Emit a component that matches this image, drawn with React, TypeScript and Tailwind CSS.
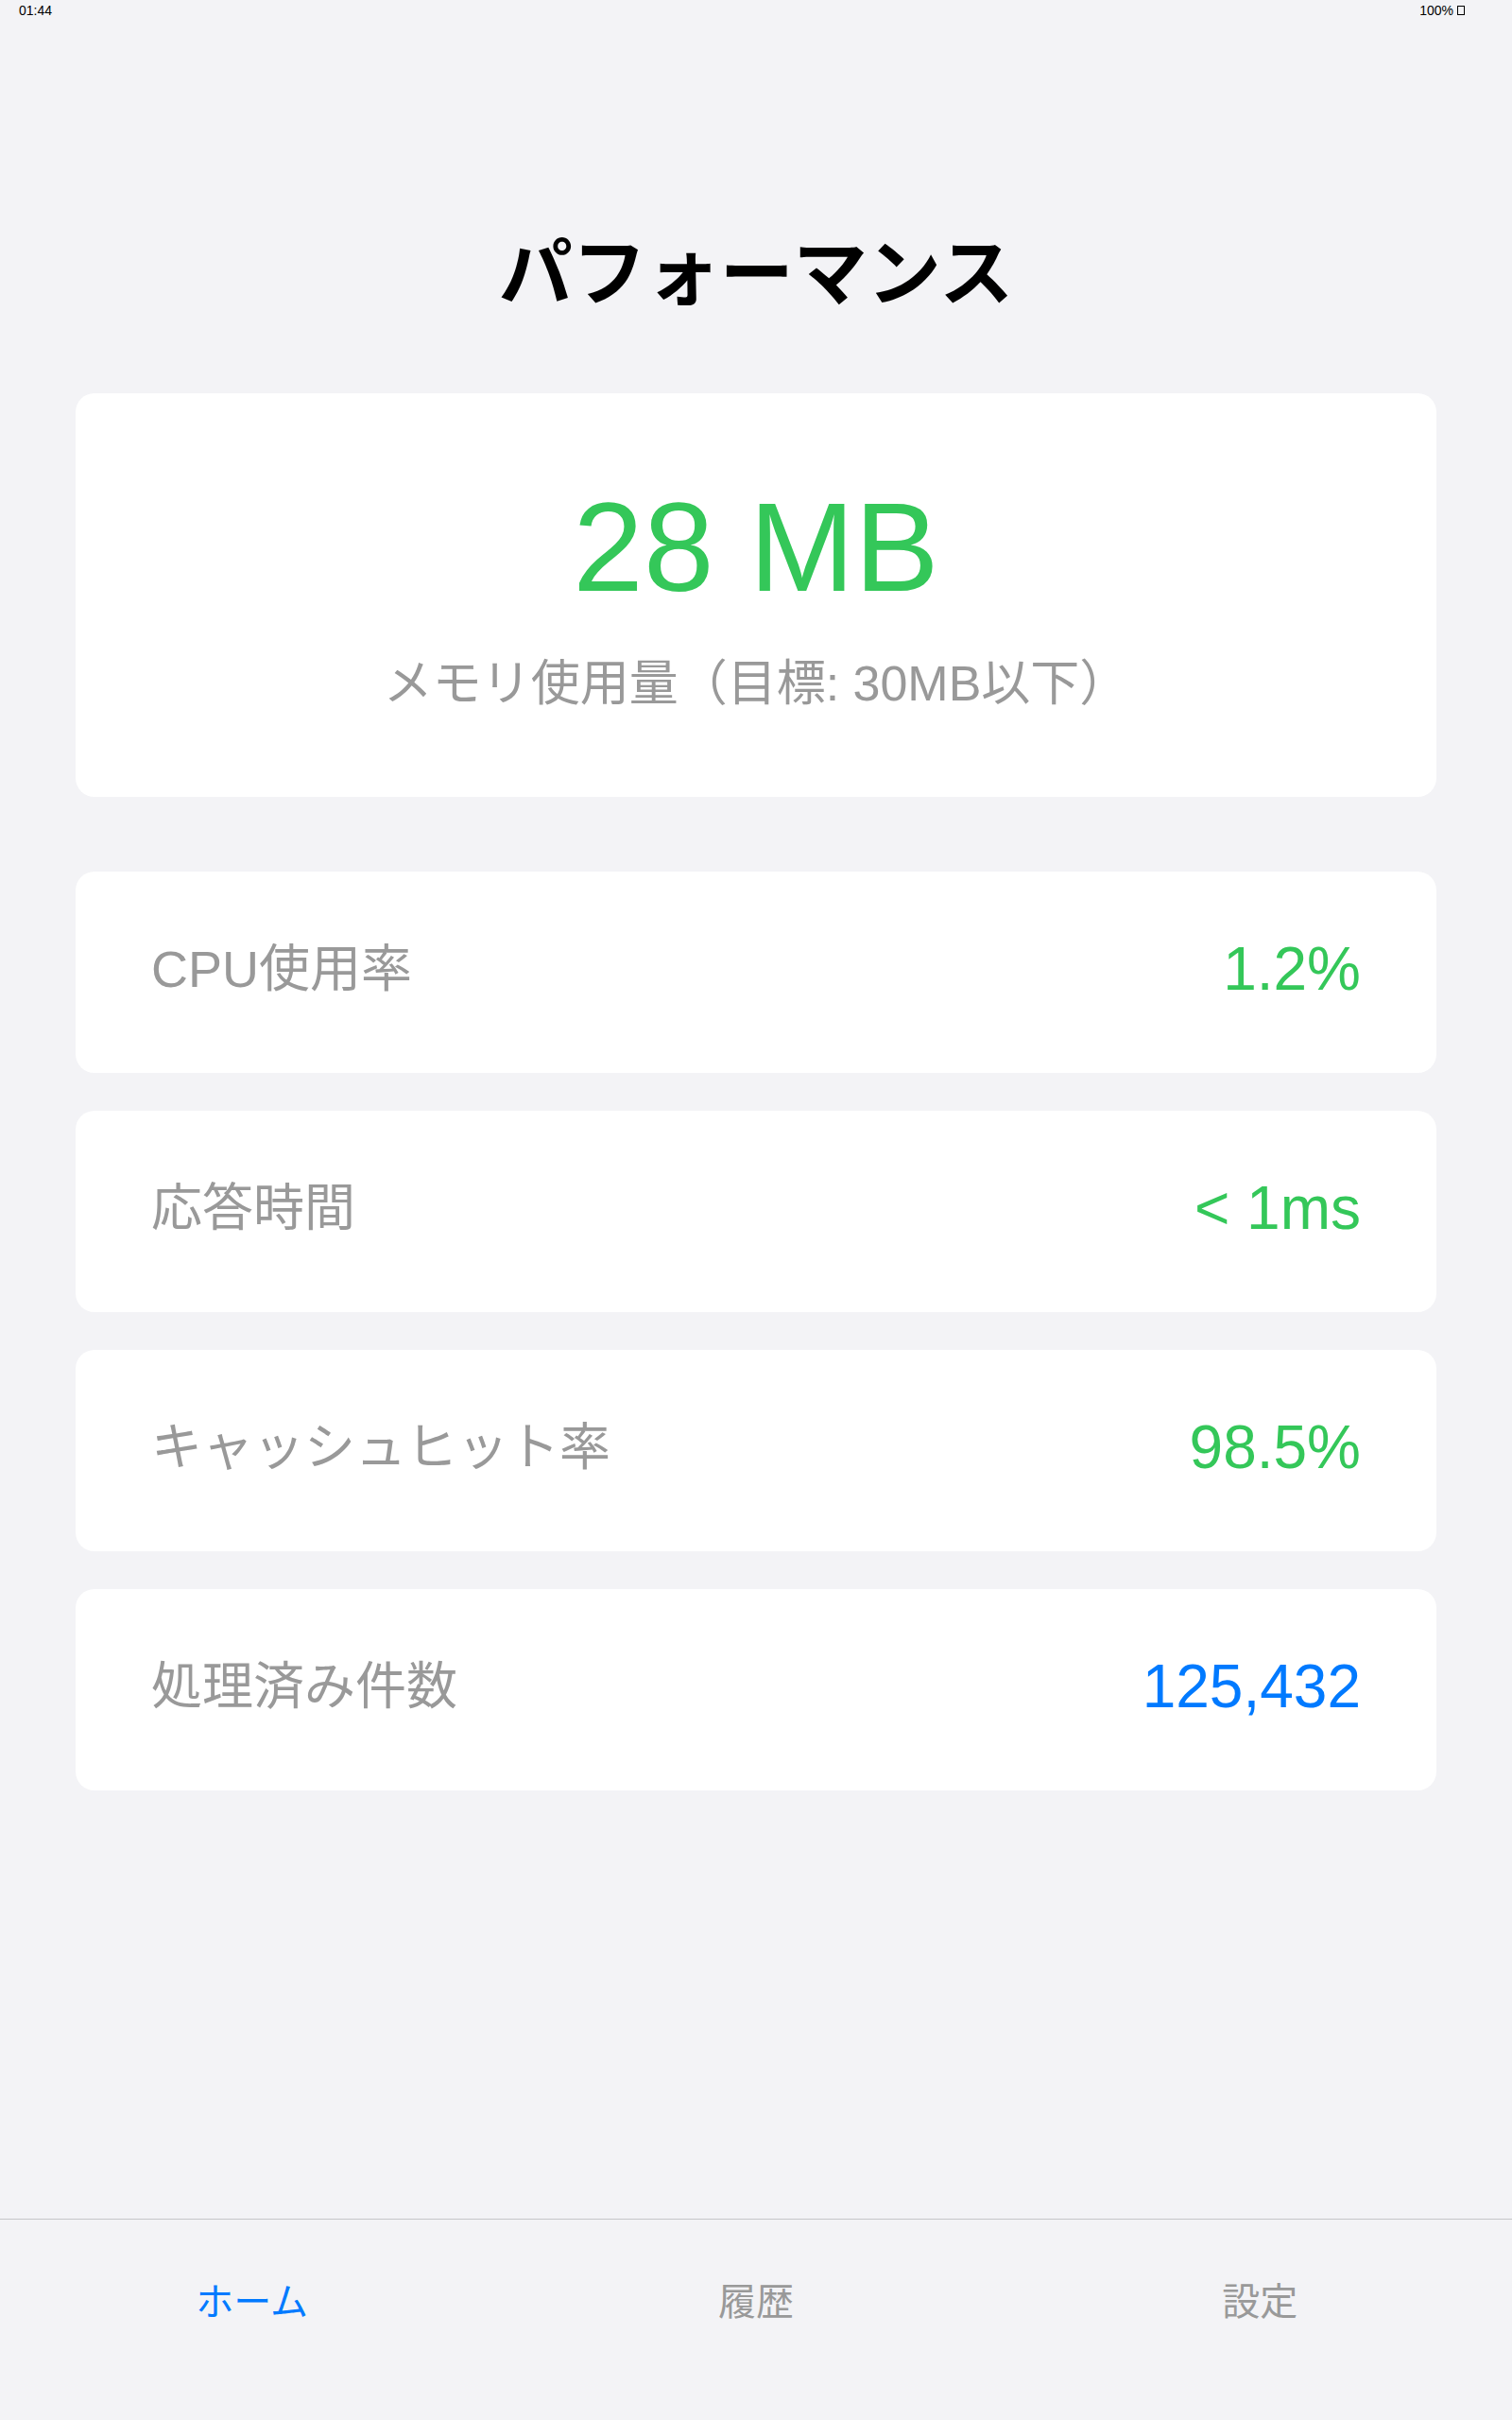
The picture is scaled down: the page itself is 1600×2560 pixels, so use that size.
import type { ReactNode } from 'react'

const stats: { label: string; value: string; tone: 'green' | 'blue' }[] = [
  { label: 'CPU使用率', value: '1.2%', tone: 'green' },
  { label: '応答時間', value: '< 1ms', tone: 'green' },
  { label: 'キャッシュヒット率', value: '98.5%', tone: 'green' },
  { label: '処理済み件数', value: '125,432', tone: 'blue' },
]

const tabs = ['ホーム', '履歴', '設定']

function StatusBar() {
  return (
    <div className="flex h-[24px] items-start justify-between px-[20px] pt-[2px] text-[14px] leading-[18px] text-black">
      <span>01:44</span>
      <span className="flex items-center gap-[4px] pr-[30px]">
        100%
        <span className="inline-block h-[10px] w-[8px] border border-black" aria-hidden="true" />
      </span>
    </div>
  )
}

function StatRow({ label, children }: { label: string; children: ReactNode }) {
  return (
    <div className="flex h-[213px] items-center justify-between rounded-[20px] bg-white px-[80px] pb-[8px]">
      <span className="text-[54px] leading-none text-[#999999]">{label}</span>
      {children}
    </div>
  )
}

export default function App() {
  return (
    <div className="flex h-[2560px] flex-col bg-[#f3f3f6] font-[Liberation_Sans,Noto_Sans_CJK_JP,sans-serif]">
      <StatusBar />

      <main className="flex flex-1 flex-col px-[80px]">
        <h1 className="mt-[219px] text-center text-[78px] font-bold leading-[94px] text-black">パフォーマンス</h1>

        <section className="mt-[79px] flex h-[427px] flex-col items-center rounded-[20px] bg-white pt-[96px]">
          <div className="text-[134px] leading-none text-[#34c759]">28 MB</div>
          <div className="mt-[51px] text-[52px] leading-none text-[#999999]">メモリ使用量（目標: 30MB以下）</div>
        </section>

        <div className="mt-[79px] flex flex-col gap-[40px]">
          {stats.map((s) => (
            <StatRow key={s.label} label={s.label}>
              <span
                className={
                  s.tone === 'blue'
                    ? 'text-[64px] leading-none text-[#007aff]'
                    : 'text-[64px] leading-none text-[#34c759]'
                }
              >
                {s.value}
              </span>
            </StatRow>
          ))}
        </div>
      </main>

      <nav className="grid h-[213px] grid-cols-3 border-t border-[#c6c6c8] bg-[#f3f3f6] pt-[67px]">
        {tabs.map((t, i) => (
          <div
            key={t}
            className={
              i === 0
                ? 'text-center text-[40px] leading-none text-[#007aff]'
                : 'text-center text-[40px] leading-none text-[#999999]'
            }
          >
            {t}
          </div>
        ))}
      </nav>
    </div>
  )
}
